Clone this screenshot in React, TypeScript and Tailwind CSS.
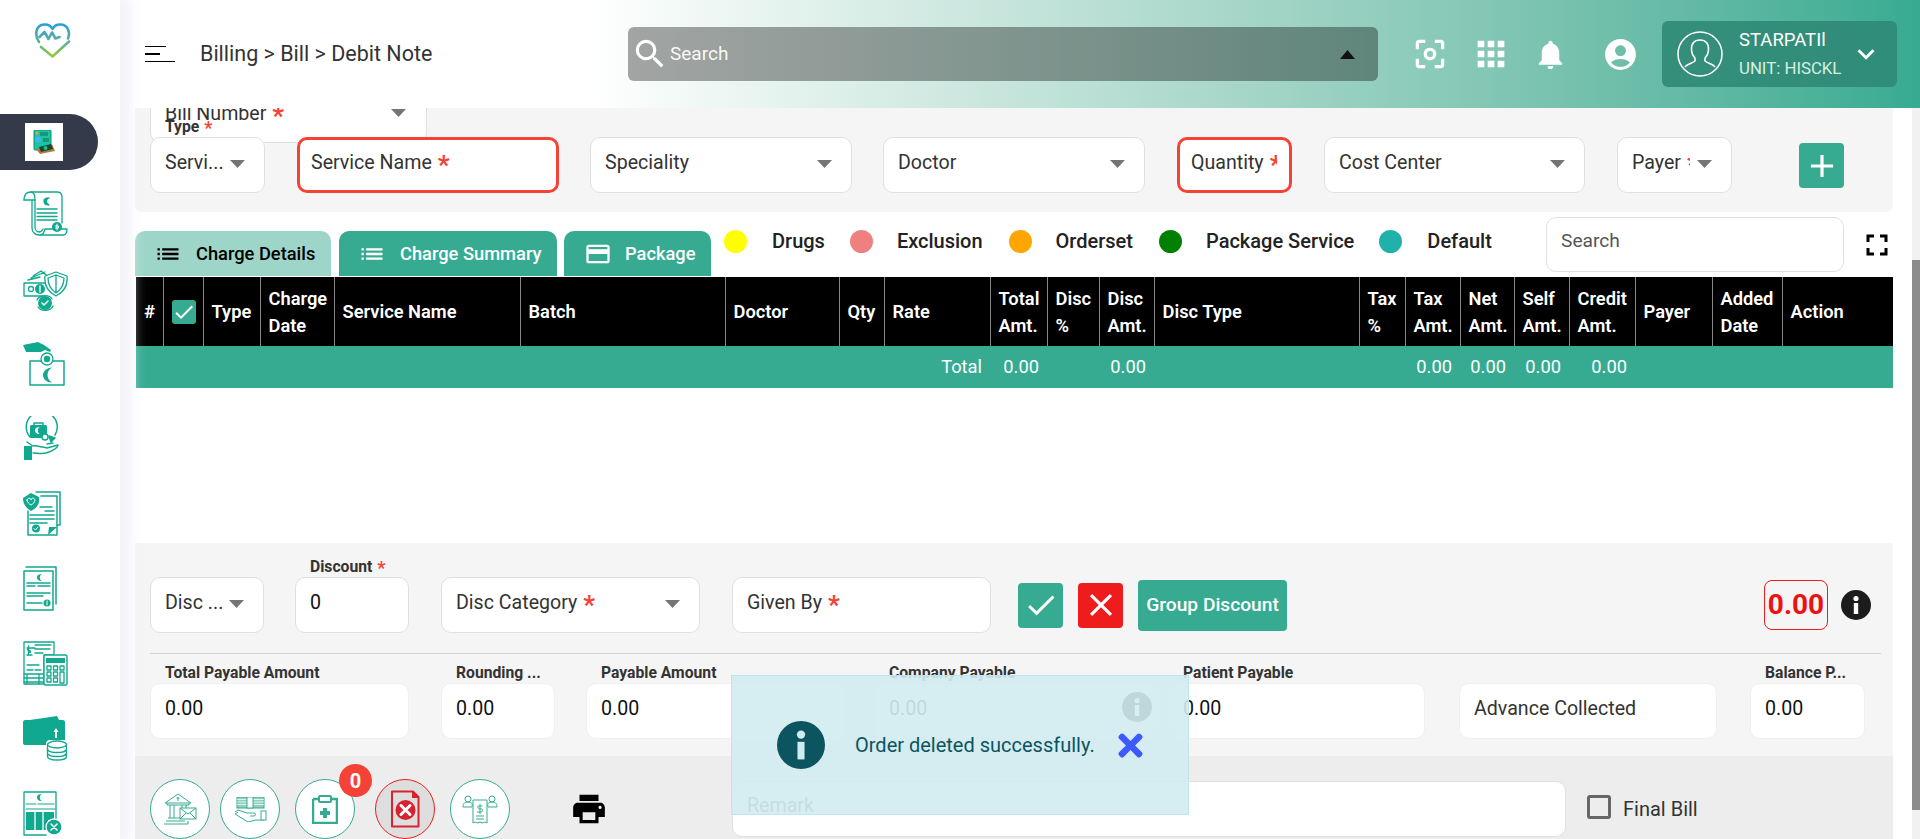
import React from "react";
import {
  MdApps, MdCenterFocusWeak, MdNotifications, MdAccountCircle, MdExpandMore, MdSearch, MdList,
  MdCreditCard, MdFullscreen, MdPrint, MdAdd, MdCheck, MdClose,
} from "react-icons/md";
import { FaTimes } from "react-icons/fa";

const T = "#10a88e";

function Caret({ className = "" }: { className?: string }) {
  return (
    <svg width="15" height="8" viewBox="0 0 15 8" className={className}>
      <path d="M0 0h15L7.5 8z" fill="#757575" />
    </svg>
  );
}

function Star() {
  return <span className="inline-block ml-[6px] text-[#f44336] font-bold text-[26px] leading-[0] translate-y-[5px]">*</span>;
}
function LabelStar() {
  return <span className="inline-block ml-[5px] text-[#f44336] font-bold text-[18px] leading-[0] translate-y-[2px]">*</span>;
}

function Field({
  w, label, text, req, caret, red, className = "", soft, dark, clip = "pr-[2px]",
}: {
  w: string; label?: React.ReactNode; text?: string; req?: boolean; caret?: boolean; red?: boolean; className?: string; soft?: boolean; dark?: boolean; clip?: string;
}) {
  return (
    <div
      className={`relative shrink-0 h-[56px] bg-white rounded-[10px] ${w} ${className} ${
        red ? "border-[3px] border-[#f44336]" : soft ? "border border-[#f0f0f0]" : "border border-[#e0e0e0]"
      }`}
    >
      {label && (
        <div className="absolute -top-[20px] left-[14px] text-[15.700px] font-bold leading-[18px] text-[#333] whitespace-nowrap">{label}</div>
      )}
      <div className={`h-full ${red ? "pl-[11px] pt-[5px]" : "pl-[14px] pt-[7px]"} ${clip} text-[19.600px] leading-[36px] ${dark ? "text-[#111]" : "text-[#333]"}`}>
        <div className="overflow-hidden whitespace-nowrap">
          {text}
          {req && <Star />}
        </div>
      </div>
      {caret && <Caret className="absolute right-[19px] top-[22px]" />}
    </div>
  );
}

const cols: [React.ReactNode, number][] = [
  ["#", 27], ["", 40], ["Type", 57], [<>Charge<br />Date</>, 74], ["Service Name", 186], ["Batch", 205], ["Doctor", 114], ["Qty", 45], ["Rate", 106],
  [<>Total<br />Amt.</>, 57], [<>Disc<br />%</>, 52], [<>Disc<br />Amt.</>, 55], ["Disc Type", 205], [<>Tax<br />%</>, 46], [<>Tax<br />Amt.</>, 55],
  [<>Net<br />Amt.</>, 54], [<>Self<br />Amt.</>, 55], [<>Credit<br />Amt.</>, 66], ["Payer", 77], [<>Added<br />Date</>, 70], ["Action", 111],
];
const totals: Record<number, string> = { 8: "Total", 9: "0.00", 11: "0.00", 14: "0.00", 15: "0.00", 16: "0.00", 17: "0.00" };

function Logo() {
  return (
    <svg width="37" height="35" viewBox="0 0 37 35" fill="none" strokeLinecap="round" strokeLinejoin="round">
      <defs>
        <linearGradient id="lg" x1="0" y1="0" x2="0" y2="1">
          <stop offset="0" stopColor="#2b9fd9" />
          <stop offset="0.55" stopColor="#5fb09a" />
          <stop offset="1" stopColor="#93cc3c" />
        </linearGradient>
      </defs>
      <path
        d="M5 19C0 12 2 2 10 1.5c4-.3 7 1.5 8.5 4.5C20 3 23 1.2 27 1.5c7 .5 9.5 8 7 14M5.5 14l5-5 4 7 3.500-6.500 3.500 6 4-1.500M7 24l11.500 9.500L35 18.500"
        stroke="url(#lg)" strokeWidth="2.600"
      />
    </svg>
  );
}

function ActiveIcon() {
  return (
    <svg width="22" height="24" viewBox="0 0 22 24">
      <rect x="1" y="0" width="17" height="20" rx="1" fill="#1cc4a0" stroke="#0e8f78" />
      <circle cx="4" cy="3" r="1.500" fill="#f2a03c" />
      <path d="M7 3h8M7 5h8" stroke="#0a6c5c" />
      <circle cx="5" cy="9.500" r="3" fill="#45b4e8" />
      <path d="M10 9h6M10 11h6" stroke="#0a6c5c" />
      <path d="M3 19l16-5 3 7-15 3z" fill="#b77a33" />
      <path d="M6 17l12-3 2 5-12 3z" fill="#114a3a" />
      <circle cx="12.500" cy="18" r="2" fill="#2fb890" />
    </svg>
  );
}

const sw = { fill: "none", stroke: T, strokeWidth: 1.300, strokeLinejoin: "round" as const, strokeLinecap: "round" as const };

const SideIcons: React.ReactNode[] = [
  <svg key="1" width="45" height="45" viewBox="0 0 45 45" {...sw}>
    <path d="M1 9C1 4 3 1 8 1h26c3 0 5 2 5 5v26" />
    <path d="M8 1c3 0 4 3 4 8H1M9 9v28c0 4 3 7 7 7h24c3 0 4-3 4-6H22c-1 4-2 6-6 6" />
    <path d="M12 9v27c0 3 2 5 4 5s3-1 4-3" />
    <path d="M14 18h20M14 22h20M14 25.500h20M14 29h20" strokeWidth="1.400" />
    <path d="M26 7c-3 1-4 5 0 7-4 0-5-2-5-4s2-3 5-3z" fill={T} />
    <circle cx="34" cy="36" r="5" fill={T} stroke="none" />
    <path d="M34 33v6M32.500 35h3v2h-3" stroke="#fff" strokeWidth="1" />
  </svg>,
  <svg key="2" width="45" height="44" viewBox="0 0 45 44" {...sw}>
    <path d="M1 16v13h18M1 16h22M5 13l12-3M10 9l8-5 8 6 5 2M8 11l14-6" />
    <circle cx="8" cy="22" r="2.500" />
    <circle cx="17" cy="22" r="5" fill={T} stroke="none" />
    <path d="M17 19v6" stroke="#fff" />
    <path d="M33 5l11 4c1 9-3 16-11 20-8-4-12-11-11-20z" fill="#fff" />
    <path d="M33 8l8 3c0 6-2 11-8 15-6-4-8-9-8-15zM33 9v16" />
    <circle cx="22" cy="36" r="7" fill={T} stroke="none" />
    <path d="M14 33c2-5 12-6 15-1M30 39c-2 5-12 6-15 1" />
    <path d="M19 36l2 2 4-4" stroke="#fff" strokeWidth="1.500" />
  </svg>,
  <svg key="3" width="42" height="44" viewBox="0 0 42 44" {...sw}>
    <path d="M0 3l15-3 6 3 7 5-1 2-5-2-4 2H6L3 10z" fill={T} stroke="none" />
    <rect x="7" y="19" width="34" height="24" strokeWidth="1.500" />
    <rect x="18" y="17" width="12" height="4" fill="#fff" stroke="none" />
    <circle cx="24" cy="17" r="6" fill="#fff" />
    <circle cx="24" cy="17" r="3.200" fill={T} stroke="none" />
    <path d="M29 25.500c-5 .5-9 3.500-9 7.500s4 7.500 9 7.500c-3-1.500-4.500-4.500-4.500-7.500s1.500-6 4.500-7.500z" fill={T} stroke="none" />
  </svg>,
  <svg key="4" width="36" height="45" viewBox="0 0 36 45" {...sw} strokeWidth="1.500">
    <path d="M7 21A15.500 15.500 0 1 1 32 19" />
    <rect x="7" y="9" width="17" height="13" rx="1.500" fill={T} stroke="none" />
    <rect x="11" y="7" width="9" height="3" />
    <path d="M17 11c-3 1-3 6 0 7-4 0-5-2-5-4s2-3 5-3z" fill="#fff" stroke="none" />
    <circle cx="22" cy="21" r="3" fill="#fff" />
    <path d="M26 20l2 6 4-4z" fill={T} />
    <rect x="1" y="30" width="8" height="14" fill={T} stroke="none" />
    <path d="M4 26l6 4c4-1 7 1 10 1l4 1 11-3c0 3-6 6-12 8-5 1-9 0-13 0" />
    <path d="M30 27l-6 1" />
  </svg>,
  <svg key="5" width="38" height="45" viewBox="0 0 38 45" {...sw} strokeWidth="1.500">
    <path d="M13 1h24v33h-3" />
    <path d="M18 5h16v39H5V20" />
    <path d="M7 24h24M7 28h24M7 32h17" strokeWidth="1.600" />
    <path d="M17 16l12 0M22 20h9" />
    <path d="M0 7l8-5 8 4c1 7-2 11-8 14C3 17 0 13 0 7z" fill={T} stroke="none" />
    <path d="M4 9c1-3 4-2 4 0 0-2 3-3 4 0 0 2-2 4-4 5-2-1-4-3-4-5z" stroke="#fff" strokeWidth="1" />
    <circle cx="13" cy="37.500" r="4" fill={T} stroke="none" />
    <path d="M11 37.500l1.500 1.500 2.500-3" stroke="#fff" strokeWidth="1" />
    <path d="M25 44l9-8h-8z" fill={T} stroke="none" />
  </svg>,
  <svg key="6" width="34" height="45" viewBox="0 0 34 45" {...sw} strokeWidth="1.500">
    <path d="M3 1h30v37" />
    <path d="M1 5h29v39H1z" fill="#fff" />
    <path d="M4 17h23M4 20h8M15 20h12M4 27h23M4 30h16M4 37h15" strokeWidth="1.500" />
    <path d="M19 8c-3 1-3 6 0 7-4 0-5-2-5-4s2-3 5-3z" fill={T} stroke="none" />
    <circle cx="24" cy="37" r="3.500" fill={T} stroke="none" />
    <path d="M24 35v4" stroke="#fff" strokeWidth="1" />
  </svg>,
  <svg key="7" width="45" height="45" viewBox="0 0 45 45" {...sw}>
    <path d="M1 1h30v13H21v29H1z" strokeWidth="1.300" />
    <path d="M12 7H4M4 14h5M12 4h16M12 8h15M12 12h8M4 24h12M4 29h6M12 29h6" />
    <path d="M6 7.500c-2 0-2 1.500 0 2s2 2 0 2M5.500 5v9" strokeWidth="1.400" />
    <path d="M1 33h19M1 37h19M1 41h19M4 33v10M16 33v10" />
    <rect x="21" y="14" width="23" height="30" rx="1.500" fill="#fff" strokeWidth="1.400" />
    <rect x="23" y="17" width="19" height="5" fill={T} stroke="none" />
    <path d="M24 25h4v4h-4zM30.500 25h4v4h-4zM37 25h4v4h-4zM24 31h4v4h-4zM30.500 31h4v4h-4zM37 31h4v11h-4zM24 37h4v4h-4zM30.500 37h4v4h-4z" />
  </svg>,
  <svg key="8" width="44" height="45" viewBox="0 0 44 45" {...sw}>
    <path d="M7 4l27-4 2 4z" fill={T} stroke="none" />
    <path d="M2 4h38c1 0 2 1 2 2v18H27c-3 0-4 2-4 4v1H2c-1 0-2-1-2-2V6c0-1 1-2 2-2z" fill={T} stroke="none" />
    <path d="M33 12l-2.500 4h1.500v6h2v-6h1.500z" fill="#fff" stroke="none" />
    <ellipse cx="34" cy="28.500" rx="9.500" ry="3.500" />
    <path d="M24.500 28.500v12c0 2 4 3.500 9.500 3.500s9.500-1.500 9.500-3.500v-12M24.500 33c0 2 4 3.500 9.500 3.500s9.500-1.500 9.500-3.500M24.500 37c0 2 4 3.500 9.500 3.500s9.500-1.500 9.500-3.500" />
  </svg>,
  <svg key="9" width="39" height="45" viewBox="0 0 39 45" {...sw}>
    <path d="M33 33V1H1v43h22" strokeWidth="1.300" />
    <path d="M3 13h10M15 13h16M3 18h29" strokeWidth="1.100" />
    <rect x="3" y="21" width="28" height="8" fill={T} stroke="none" />
    <rect x="3" y="29" width="22" height="10" fill={T} stroke="none" />
    <path d="M12 21v19M20 21v19" stroke="#fff" />
    <path d="M19 3c-3 1-3 6 0 7-4 0-5-2-5-4s2-3 5-3z" fill={T} stroke="none" />
    <circle cx="31" cy="36" r="8" fill={T} stroke="#fff" />
    <path d="M28 33l6 6m0-6l-6 6" stroke="#fff" strokeWidth="1.600" />
  </svg>,
];

const BT = "#36ab92";
const Bank = () => (
  <svg width="34" height="32" viewBox="0 0 34 32" fill="none" stroke={BT} strokeWidth="1">
    <path d="M2 10L15 1l13 9zM4 10v2h22v-2M7 12v13M11 12v13M19 12v6M23 12v6M5 25h17M3 28h19M1 31h24v-3" />
    <path d="M15 4v4M13.500 5h3" />
    <rect x="17" y="15" width="16" height="11" fill="#fff" />
    <path d="M17 15l8 6 8-6M17 26l6-6M33 26l-6-6" />
  </svg>
);
const MoneyHand = () => (
  <svg width="33" height="25" viewBox="0 0 33 25" fill="none" stroke={BT} strokeWidth="1">
    <rect x="3" y="0" width="27" height="11" fill="#8fd0c1" />
    <path d="M3 2.500h27M3 5h27M3 7.500h27" stroke="#fff" strokeWidth="0.700" />
    <rect x="13" y="0" width="6" height="11" fill="#fff" />
    <path d="M1 15l3-2 9 3h7c2 0 2 3 0 3h-4m-12-4l-3 2 13 8 8-2h8" />
    <rect x="27" y="14" width="5" height="9" fill="#fff" />
  </svg>
);
const Clip = () => (
  <svg width="26" height="29" viewBox="0 0 26 29">
    <path d="M1 4h6M19 4h6V28H1V4" fill="none" stroke={BT} strokeWidth="2.500" />
    <rect x="7" y="1" width="12" height="6" rx="1" fill="#fff" stroke={BT} strokeWidth="2" />
    <path d="M11 14h4v3h3v4h-3v3h-4v-3H8v-4h3z" fill={BT} transform="translate(0 -1)" />
  </svg>
);
const RedDoc = () => (
  <svg width="30" height="38" viewBox="0 0 30 38">
    <path d="M2 1.500h21l5.500 5.500v29.500H2z" fill="none" stroke="#d9222f" strokeWidth="2" strokeLinejoin="round" />
    <path d="M22 1l7 7h-7z" fill="#d9222f" />
    <circle cx="15.500" cy="20" r="10" fill="#d9222f" />
    <path d="M11 15.500l9 9m0-9l-9 9" stroke="#fff" strokeWidth="3" strokeLinecap="round" />
  </svg>
);
const Receipt = () => (
  <svg width="36" height="29" viewBox="0 0 36 29" fill="none" stroke={BT} strokeWidth="1">
    <circle cx="6" cy="4" r="3" />
    <circle cx="30" cy="4" r="3" />
    <path d="M1 12c0-4 2-5 5-5s5 1 4 5zM35 12c0-4-2-5-5-5s-5 1-4 5z" />
    <path d="M11 5h14v23l-2-1-2 1-3-1-3 1-2-1-2 1z" fill="#fff" />
    <path d="M18 9v10M20.500 11h-4c-1 0-1 3 1 3h2c2 0 1.500 3-.5 3h-4" />
    <path d="M14 21h8M14 24h8" />
  </svg>
);

function Round({ children, red, badge, className = "" }: { children: React.ReactNode; red?: boolean; badge?: boolean; className?: string }) {
  return (
    <div className={`relative shrink-0 w-[60px] h-[60px] rounded-full flex items-center justify-center border ${red ? "border-[#f01d1d] bg-[#dedede]" : "border-[#36ab92] bg-white"} ${className}`}>
      {children}
      {badge && (
        <div className="absolute -top-[16px] left-[43px] w-[33px] h-[33px] rounded-full bg-[#f44336] text-white font-bold text-[20px] flex items-center justify-center">0</div>
      )}
    </div>
  );
}

function InfoGlyph({ size, stem, bg }: { size: number; stem: string; bg: string }) {
  return (
    <svg width={size} height={size} viewBox="0 0 30 30">
      <circle cx="15" cy="15" r="15" fill={bg} />
      <circle cx="15" cy="8.500" r="2.600" fill={stem} />
      <rect x="12.800" y="13" width="4.400" height="11" fill={stem} />
    </svg>
  );
}

export default function App() {
  return (
    <div className="relative flex h-screen w-full overflow-hidden bg-white font-[family-name:Roboto,sans-serif]">
      {/* sidebar */}
      <aside className="relative z-20 shrink-0 w-[120px] h-full bg-white shadow-[4px_0_14px_6px_#f2f2f8] flex flex-col">
        <div className="ml-[34px] mt-[23px] h-[91px]"><Logo /></div>
        <div className="w-[98px] h-[56px] rounded-r-[28px] bg-[#343a4a] flex items-center pl-[25px] shrink-0">
          <div className="w-[38px] h-[38px] bg-white flex items-center justify-center"><ActiveIcon /></div>
        </div>
        <div className="flex flex-col mt-[21px] gap-[30px] pl-[23px]">
          {SideIcons.map((ic, i) => (
            <div key={i} className="h-[45px] shrink-0 flex items-center">{ic}</div>
          ))}
        </div>
      </aside>

      {/* main */}
      <main className="flex-1 min-w-0 flex flex-col h-full">
        <header className="shrink-0 h-[108px] flex items-center pl-[25px] bg-gradient-to-r from-white from-[26%] to-[#36ab92]">
          <div className="shrink-0 w-[30px] flex flex-col gap-[6.500px]">
            <div className="h-px w-[21px] bg-black" />
            <div className="h-[1.500px] w-[15px] bg-black" />
            <div className="h-px w-[30px] bg-black" />
          </div>
          <div className="ml-[25px] w-[233px] text-[21.500px] text-[#333] whitespace-nowrap">Billing &gt; Bill &gt; Debit Note</div>
          <div className="ml-[195px] shrink-0 w-[750px] h-[54px] rounded-[6px] bg-black/35 flex items-center pl-[3px] pr-[23px] text-white">
            <MdSearch size={38} />
            <span className="ml-[1px] text-[19px] text-white/95">Search</span>
            <svg width="15" height="9" viewBox="0 0 15 9" className="ml-auto"><path d="M7.500 0L15 9H0z" fill="#111" /></svg>
          </div>
          <MdCenterFocusWeak size={38} className="ml-[33px] text-white shrink-0" />
          <MdApps size={40} className="ml-[22px] text-white shrink-0" />
          <MdNotifications size={35} className="ml-[22px] text-white shrink-0" />
          <MdAccountCircle size={37} className="ml-[34px] text-white shrink-0" />
          <div className="ml-auto mr-[23px] shrink-0 w-[235px] h-[66px] rounded-[6px] bg-[#2f8a76]/90 flex items-center pl-[15px] text-white">
            <svg width="46" height="46" viewBox="0 0 46 46" fill="none" stroke="#fff" strokeWidth="1.500">
              <circle cx="23" cy="23" r="22" />
              <path d="M23 9c-6 0-9 4-8.500 10 .2 3 1.500 6 3.500 8v3c-2 2-8 3-10 6M23 9c6 0 9 4 8.500 10-.2 3-1.500 6-3.500 8v3c2 2 8 3 10 6" />
            </svg>
            <div className="ml-[16px] flex flex-col gap-[9px]">
              <div className="text-[18.500px] leading-[19px] whitespace-nowrap">STARPATIl</div>
              <div className="text-[16.800px] leading-[19px] text-[#d9f0e0] whitespace-nowrap">UNIT: HISCKL</div>
            </div>
            <MdExpandMore size={34} className="ml-[8px] shrink-0" />
          </div>
        </header>

        <div className="flex-1 min-h-0 flex overflow-hidden">
          <div className="flex-1 min-w-0 pl-[15px] pr-[19px] flex flex-col overflow-hidden">
            {/* filter panel */}
            <section className="shrink-0 h-[104px] bg-[#f5f5f5] rounded-b-[6px] px-[15px]">
              <div className="relative w-[277px] h-[35px] bg-white border-x border-b border-[#e0e0e0] rounded-b-[10px] overflow-hidden pl-[14px] text-[19.600px] text-[#333]">
                <div className="-mt-[8px] leading-[28px] whitespace-nowrap">Bill Number<Star /></div>
                <Caret className="absolute right-[20px] top-[1px]" />
              </div>
              <div className="relative flex -mt-[6px]">
                <Field w="w-[115px]" text="Servi..." caret label={<>Type<LabelStar /></>} />
                <Field w="w-[262px]" className="ml-[32px]" text="Service Name" req red />
                <Field w="w-[262px]" className="ml-[31px]" text="Speciality" caret />
                <Field w="w-[262px]" className="ml-[31px]" text="Doctor" caret />
                <Field w="w-[115px]" className="ml-[32px]" text="Quantity" req red clip="pr-[12px]" />
                <Field w="w-[261px]" className="ml-[32px]" text="Cost Center" caret />
                <Field w="w-[115px]" className="ml-[32px]" text="Payer" req caret clip="pr-[41px]" />
                <button className="ml-[67px] mt-[6px] w-[45px] h-[45px] rounded-[4px] bg-[#36ab92] text-white flex items-center justify-center">
                  <MdAdd size={38} />
                </button>
              </div>
            </section>

            {/* tabs & legend */}
            <div className="shrink-0 mt-[5px] h-[60px] flex items-start">
              <div className="mt-[14px] w-[196px] h-[45px] rounded-t-[10px] bg-[#9dd5c8] flex items-center pl-[19px] text-black font-medium text-[18.300px] shrink-0">
                <MdList size={28} /><span className="ml-[14px] whitespace-nowrap">Charge Details</span>
              </div>
              <div className="ml-[8px] mt-[14px] w-[218px] h-[45px] rounded-t-[10px] bg-[#36ab92] flex items-center pl-[19px] text-white font-medium text-[18.300px] shrink-0">
                <MdList size={28} /><span className="ml-[14px] whitespace-nowrap">Charge Summary</span>
              </div>
              <div className="ml-[7px] mt-[14px] w-[147px] h-[45px] rounded-t-[10px] bg-[#36ab92] flex items-center pl-[20px] text-white font-medium text-[18.300px] shrink-0">
                <MdCreditCard size={28} /><span className="ml-[13px] whitespace-nowrap">Package</span>
              </div>
              <div className="ml-[13px] mt-[12px] flex items-center text-[20px] font-medium text-[#222] leading-[24px] whitespace-nowrap">
                <i className="block w-[23px] h-[23px] rounded-full bg-[#ffff00]" /><span className="ml-[25px] mr-[25px]">Drugs</span>
                <i className="block w-[23px] h-[23px] rounded-full bg-[#f08080]" /><span className="ml-[24px] mr-[26px]">Exclusion</span>
                <i className="block w-[23px] h-[23px] rounded-full bg-[#ffa500]" /><span className="ml-[24px] mr-[26px]">Orderset</span>
                <i className="block w-[23px] h-[23px] rounded-full bg-[#008000]" /><span className="ml-[24px] mr-[25px]">Package Service</span>
                <i className="block w-[23px] h-[23px] rounded-full bg-[#20b2aa]" /><span className="ml-[25px]">Default</span>
              </div>
              <div className="ml-auto w-[298px] h-[55px] bg-white border border-[#e0e0e0] rounded-[10px] pl-[14px] pt-[8px] text-[19.200px] leading-[30px] text-[#555] shrink-0">Search</div>
              <MdFullscreen size={36} className="ml-[15px] mr-[-2px] mt-[10px] text-black shrink-0" />
            </div>

            {/* table */}
            <table className="shrink-0 ml-[1px] table-fixed border-collapse w-[1757px]">
              <thead>
                <tr className="h-[69px] bg-black text-white">
                  {cols.map(([c, w], i) => (
                    <th key={i} style={{ width: w }} className="px-2 text-left font-semibold text-[18.300px] leading-[27px] border-r border-[#888] last:border-r-0 whitespace-nowrap overflow-hidden align-middle">
                      {i === 1 ? (
                        <span className="block w-[24px] h-[24px] rounded-[3px] bg-[#36ab92]"><MdCheck size={24} className="text-white" /></span>
                      ) : c}
                    </th>
                  ))}
                </tr>
              </thead>
              <tbody>
                <tr className="h-[42px] bg-[#36ab92] text-white text-[18.300px]">
                  {cols.map((_, i) => (
                    <td key={i} className="px-2 text-right whitespace-nowrap overflow-hidden">{totals[i] ?? ""}</td>
                  ))}
                </tr>
              </tbody>
            </table>

            {/* discount panel */}
            <section className="shrink-0 mt-[155px] h-[213px] bg-[#f5f5f5] pl-[15px] pr-[12px] pt-[34px]">
              <div className="flex items-center">
                <Field w="w-[114px]" text="Disc ..." caret />
                <Field w="w-[114px]" className="ml-[31px]" text="0" dark label={<>Discount<LabelStar /></>} />
                <Field w="w-[259px]" className="ml-[32px]" text="Disc Category" req caret />
                <Field w="w-[259px]" className="ml-[32px]" text="Given By" req />
                <button className="ml-[27px] w-[45px] h-[45px] rounded-[4px] bg-[#36ab92] text-white flex items-center justify-center"><MdCheck size={36} /></button>
                <button className="ml-[15px] w-[45px] h-[45px] rounded-[4px] bg-[#ee1c1c] text-white flex items-center justify-center"><MdClose size={38} /></button>
                <button className="ml-[15px] w-[149px] h-[51px] rounded-[4px] bg-[#36ab92] text-white text-[19.200px] font-medium whitespace-nowrap">Group Discount</button>
                <div className="ml-auto w-[64px] h-[50px] rounded-[8px] border border-[#ee1c1c] text-[#f01010] text-[28px] font-bold flex items-center justify-center">0.00</div>
                <div className="ml-[13px] mr-[10px]"><InfoGlyph size={30} stem="#fff" bg="#1c1c1c" /></div>
              </div>
              <div className="h-px bg-[#d4d4d4] mt-[20px]" />
              <div className="flex mt-[29px]">
                <Field w="w-[259px]" soft dark text="0.00" label="Total Payable Amount" />
                <Field w="w-[114px]" className="ml-[32px]" soft dark text="0.00" label="Rounding ..." />
                <Field w="w-[261px]" className="ml-[31px]" soft dark text="0.00" label="Payable Amount" />
                <div className="relative ml-[27px]">
                  <Field w="w-[286px]" soft dark text="0.00" label="Company Payable" />
                  <div className="absolute left-[248px] top-[9px]"><InfoGlyph size={30} stem="#fff" bg="#1c1c1c" /></div>
                </div>
                <Field w="w-[257px]" className="ml-[8px]" soft dark text="0.00" label="Patient Payable" />
                <Field w="w-[258px]" className="ml-[34px]" soft text="Advance Collected" />
                <Field w="w-[115px]" className="ml-[33px]" soft dark text="0.00" label="Balance P..." />
              </div>
            </section>

            {/* bottom action bar */}
            <section className="shrink-0 h-[83px] bg-[#ededed] pl-[15px] pt-[23px] flex items-start overflow-hidden">
              <Round><Bank /></Round>
              <Round className="ml-[10px]"><MoneyHand /></Round>
              <Round className="ml-[15px]" badge><Clip /></Round>
              <Round className="ml-[20px]" red><RedDoc /></Round>
              <Round className="ml-[15px]"><Receipt /></Round>
              <MdPrint size={38} className="ml-[60px] mt-[11px] text-black shrink-0" />
              <div className="ml-[124px] mt-[2px] w-[834px] h-[56px] shrink-0 bg-white border border-[#e0e0e0] rounded-[10px] pl-[14px] pt-[6px] text-[19.600px] leading-[36px] text-[#555]">Remark</div>
              <div className="ml-[21px] mt-[16px] w-[24px] h-[24px] border-[3px] border-[#666] rounded-[3px] shrink-0" />
              <div className="ml-[12px] mt-[15px] text-[20px] text-[#333] whitespace-nowrap">Final Bill</div>
            </section>
          </div>

          {/* scrollbar */}
          <div className="shrink-0 w-[8px] bg-[#f1f1f1]">
            <div className="mt-[152px] h-[550px] bg-[#8c8c8c]" />
          </div>
        </div>
      </main>

      {/* toast */}
      <div className="absolute z-30 left-[731px] top-[675px] w-[458px] h-[140px] bg-[#d1ecf1]/90 border border-[#bee5eb] flex items-center pl-[45px] text-[#0c5460]">
        <InfoGlyph size={48} stem="#d1ecf1" bg="#0c5460" />
        <span className="ml-[30px] text-[20px] whitespace-nowrap">Order deleted successfully.</span>
        <FaTimes size={35} className="ml-[18px] text-[#3d5afe]" />
      </div>
    </div>
  );
}
